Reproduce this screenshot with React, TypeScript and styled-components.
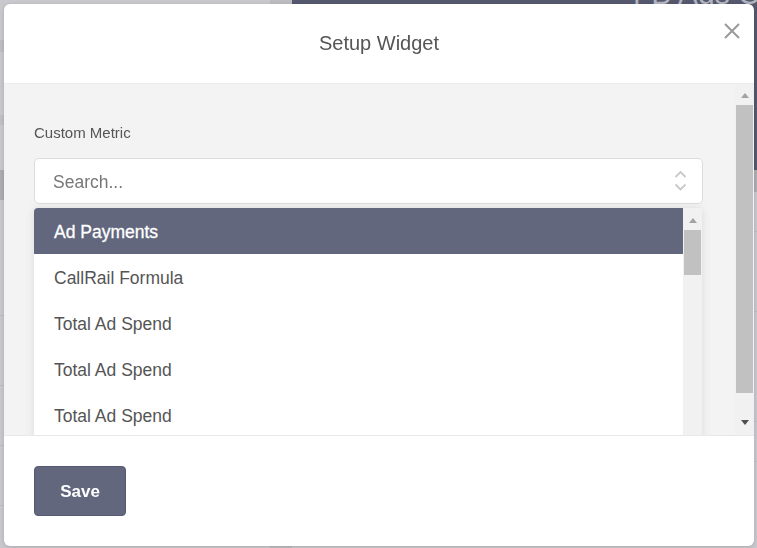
import React from "react";
import styled, { createGlobalStyle } from "styled-components";

const GlobalStyle = createGlobalStyle`
  html, body { margin: 0; padding: 0; }
  body {
    font-family: "Liberation Sans", Arial, sans-serif;
    background: #c9c9cd;
    overflow: hidden;
  }
  * { box-sizing: border-box; }
`;

/* ---------- dimmed page behind the dialog ---------- */

const Page = styled.div`
  display: flex;
  height: 548px;
`;

const Sidebar = styled.div`
  width: 270px;
  display: flex;
  flex-direction: column;
`;

const SideRow = styled.div<{ $h: number; $tone?: string; $line?: boolean }>`
  height: ${(p) => p.$h}px;
  flex: none;
  background: ${(p) => p.$tone ?? "transparent"};
  border-bottom: ${(p) => (p.$line ? "1px solid #bdbdc1" : "none")};
`;

const Gutter = styled.div`
  width: 22px;
  background: #bcbcc1;
`;

const Main = styled.div`
  flex: 1;
  display: flex;
  flex-direction: column;
  overflow: hidden;
`;

const Hero = styled.div`
  height: 170px;
  background: #56596e;
  overflow: hidden;
  padding-left: 341px;
`;

const HeroTitle = styled.div`
  font-size: 30px;
  line-height: 30px;
  color: #b3b5c1;
  white-space: nowrap;
  margin-top: -21px;
`;

const HeroEdge = styled.div`
  height: 22px;
  background: #adadb2;
`;

const MainRow = styled.div<{ $h: number }>`
  height: ${(p) => p.$h}px;
  flex: none;
  border-bottom: 1px solid #bdbdc1;
`;

/* ---------- drawn classic scrollbar ---------- */

const ScrollTrack = styled.div`
  width: 19px;
  flex: none;
  background: #f1f1f1;
  display: flex;
  flex-direction: column;
`;

const ScrollButton = styled.div<{ $dir: "up" | "down"; $inset: number }>`
  height: 20px;
  flex: none;
  display: flex;
  justify-content: center;
  align-items: ${(p) => (p.$dir === "up" ? "flex-end" : "flex-start")};
  padding: ${(p) => (p.$dir === "up" ? `0 0 ${p.$inset}px` : `${p.$inset}px 0 0`)};
`;

const Triangle = styled.span<{ $dir: "up" | "down"; $color: string }>`
  width: 0;
  height: 0;
  border-left: 4.5px solid transparent;
  border-right: 4.5px solid transparent;
  ${(p) =>
    p.$dir === "up"
      ? `border-bottom: 5px solid ${p.$color};`
      : `border-top: 5px solid ${p.$color};`}
`;

const Thumb = styled.div<{ $h: number; $gap: number }>`
  height: ${(p) => p.$h}px;
  flex: none;
  margin: ${(p) => p.$gap}px 1px 0;
  background: #c1c1c1;
`;

const TrackRest = styled.div`
  flex: 1;
`;

function Scrollbar({
  thumb,
  gap,
  upInset,
}: {
  thumb: number;
  gap: number;
  upInset: number;
}) {
  return (
    <ScrollTrack>
      <ScrollButton $dir="up" $inset={upInset}>
        <Triangle $dir="up" $color="#a3a3a3" />
      </ScrollButton>
      <Thumb $h={thumb} $gap={gap} />
      <TrackRest />
      <ScrollButton $dir="down" $inset={5}>
        <Triangle $dir="down" $color="#505050" />
      </ScrollButton>
    </ScrollTrack>
  );
}

/* ---------- dialog ---------- */

const Overlay = styled.div`
  position: fixed;
  inset: 0;
  padding: 4px 3px 2px 4px;
  display: flex;
`;

const Modal = styled.div`
  flex: 1;
  position: relative;
  background: #fff;
  border-radius: 6px;
  display: flex;
  flex-direction: column;
  overflow: hidden;
  box-shadow: 0 1px 4px rgba(0, 0, 0, 0.15);
`;

const Header = styled.div`
  height: 80px;
  flex: none;
  border-bottom: 1px solid #ececec;
  display: flex;
  align-items: center;
  justify-content: center;
`;

const Title = styled.h2`
  margin: 0;
  font-weight: normal;
  font-size: 20px;
  color: #555;
`;

const CloseButton = styled.button`
  position: absolute;
  top: 18px;
  right: 13px;
  width: 18px;
  height: 18px;
  padding: 0;
  border: 0;
  background: transparent;
  display: flex;
  cursor: pointer;
`;

const Body = styled.div`
  flex: 1;
  min-height: 0;
  display: flex;
  background: #f3f3f3;
`;

const BodyContent = styled.div`
  flex: 1;
  min-width: 0;
  overflow: hidden;
  padding: 40px 32px 0 30px;
`;

const Label = styled.label`
  display: block;
  font-size: 15px;
  line-height: 17px;
  color: #555;
  margin-bottom: 17px;
`;

const SearchBox = styled.div`
  height: 46px;
  background: #fff;
  border: 1px solid #dcdcdc;
  border-radius: 5px;
  display: flex;
  align-items: center;
  padding: 0 15px 0 18px;
`;

const SearchInput = styled.input`
  flex: 1;
  border: 0;
  outline: none;
  background: transparent;
  font-family: inherit;
  font-size: 17.5px;
  color: #555;
  padding: 2px 0 0;
  &::placeholder {
    color: #777;
  }
`;

const Menu = styled.div`
  margin: 4px 1px 0 0;
  height: 250px;
  display: flex;
  background: #fff;
  border-radius: 4px;
  overflow: hidden;
  box-shadow: 0 0 9px rgba(0, 0, 0, 0.1);
`;

const OptionList = styled.ul`
  flex: 1;
  list-style: none;
  margin: 0;
  padding: 0;
  overflow: hidden;
`;

const Option = styled.li<{ $selected?: boolean }>`
  height: 46px;
  display: flex;
  align-items: center;
  padding: 2px 20px 0;
  font-size: 17.5px;
  color: ${(p) => (p.$selected ? "#fff" : "#555")};
  background: ${(p) => (p.$selected ? "#62677e" : "#fff")};
  -webkit-text-stroke: ${(p) => (p.$selected ? "0.3px #fff" : "0")};
`;

const Footer = styled.div`
  height: 111px;
  flex: none;
  border-top: 1px solid #e8e8e8;
  padding: 30px 30px 0;
`;

const SaveButton = styled.button`
  width: 92px;
  height: 50px;
  background: #62677e;
  border: 1px solid #555a70;
  border-radius: 4px;
  color: #fff;
  font-family: inherit;
  font-weight: bold;
  font-size: 17px;
  padding-top: 2px;
  cursor: pointer;
`;

const options = [
  "Ad Payments",
  "CallRail Formula",
  "Total Ad Spend",
  "Total Ad Spend",
  "Total Ad Spend",
  "Cost Per Lead",
];

export default function App() {
  return (
    <>
      <GlobalStyle />
      <Page>
        <Sidebar>
          <SideRow $h={40} />
          <SideRow $h={12} $tone="#bebec2" />
          <SideRow $h={63} />
          <SideRow $h={10} $tone="#c0c0c4" />
          <SideRow $h={45} />
          <SideRow $h={30} $tone="#adadb1" />
          <SideRow $h={116} $line />
          <SideRow $h={70} $line />
          <SideRow $h={60} $line />
          <SideRow $h={60} $line />
        </Sidebar>
        <Gutter />
        <Main>
          <Hero>
            <HeroTitle>FB Ads Cost</HeroTitle>
          </Hero>
          <HeroEdge />
          <MainRow $h={40} />
          <MainRow $h={80} />
          <MainRow $h={110} />
          <MainRow $h={40} />
        </Main>
      </Page>

      <Overlay>
        <Modal>
          <Header>
            <Title>Setup Widget</Title>
          </Header>
          <CloseButton aria-label="Close">
            <svg width="18" height="18" viewBox="0 0 18 18">
              <path d="M2 2 L16 16 M16 2 L2 16" stroke="#9a9a9a" strokeWidth="2" fill="none" />
            </svg>
          </CloseButton>

          <Body>
            <BodyContent>
              <Label>Custom Metric</Label>
              <SearchBox>
                <SearchInput placeholder="Search..." />
                <svg width="13" height="22" viewBox="0 0 13 22">
                  <path
                    d="M1.5 7 L6.5 2 L11.5 7 M1.5 14.5 L6.5 19.5 L11.5 14.5"
                    stroke="#c8c8c8"
                    strokeWidth="1.8"
                    fill="none"
                  />
                </svg>
              </SearchBox>
              <Menu>
                <OptionList>
                  {options.map((o, i) => (
                    <Option key={i} $selected={i === 0}>
                      {o}
                    </Option>
                  ))}
                </OptionList>
                <Scrollbar thumb={45} gap={2} upInset={5} />
              </Menu>
            </BodyContent>
            <Scrollbar thumb={288} gap={1} upInset={6} />
          </Body>

          <Footer>
            <SaveButton>Save</SaveButton>
          </Footer>
        </Modal>
      </Overlay>
    </>
  );
}
